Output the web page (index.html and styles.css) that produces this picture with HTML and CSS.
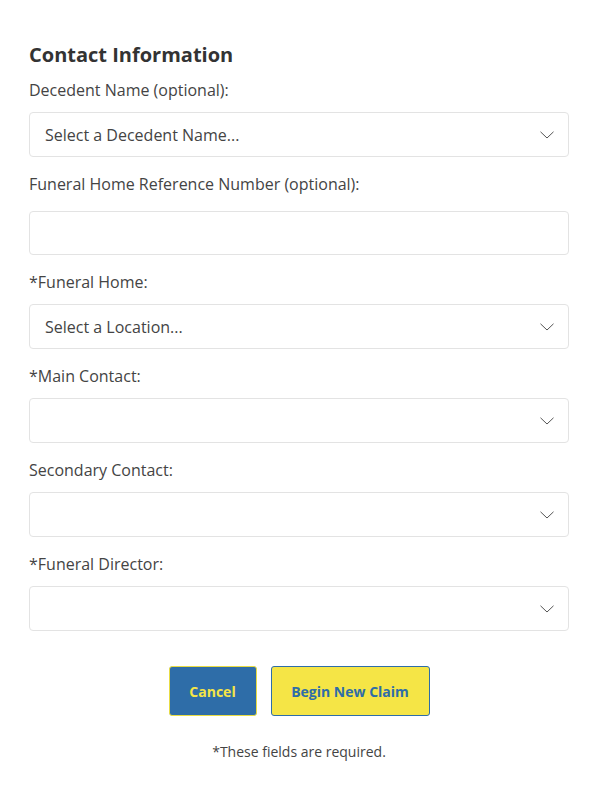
FILE: index.html
```html
<!DOCTYPE html>
<html lang="en">
<head>
<meta charset="utf-8">
<title>Contact Information</title>
<link rel="stylesheet" href="styles.css">
</head>
<body>
<main class="modal">
  <h2 class="title">Contact Information</h2>
  <form class="form">
    <div class="group">
      <label class="label">Decedent Name (optional):</label>
      <div class="field select"><span class="value">Select a Decedent Name...</span>
        <svg class="chev" width="14" height="8" viewBox="0 0 14 8"><path d="M0.5 0.8 L7 7 L13.5 0.8" fill="none" stroke="#555" stroke-width="1"/></svg></div>
    </div>
    <div class="group">
      <label class="label">Funeral Home Reference Number (optional):</label>
      <div class="field input"></div>
    </div>
    <div class="group">
      <label class="label">*Funeral Home:</label>
      <div class="field select"><span class="value">Select a Location...</span>
        <svg class="chev" width="14" height="8" viewBox="0 0 14 8"><path d="M0.5 0.8 L7 7 L13.5 0.8" fill="none" stroke="#555" stroke-width="1"/></svg></div>
    </div>
    <div class="group">
      <label class="label">*Main Contact:</label>
      <div class="field select"><span class="value"></span>
        <svg class="chev" width="14" height="8" viewBox="0 0 14 8"><path d="M0.5 0.8 L7 7 L13.5 0.8" fill="none" stroke="#555" stroke-width="1"/></svg></div>
    </div>
    <div class="group">
      <label class="label">Secondary Contact:</label>
      <div class="field select"><span class="value"></span>
        <svg class="chev" width="14" height="8" viewBox="0 0 14 8"><path d="M0.5 0.8 L7 7 L13.5 0.8" fill="none" stroke="#555" stroke-width="1"/></svg></div>
    </div>
    <div class="group">
      <label class="label">*Funeral Director:</label>
      <div class="field select"><span class="value"></span>
        <svg class="chev" width="14" height="8" viewBox="0 0 14 8"><path d="M0.5 0.8 L7 7 L13.5 0.8" fill="none" stroke="#555" stroke-width="1"/></svg></div>
    </div>
    <div class="actions">
      <button type="button" class="btn btn-cancel">Cancel</button>
      <button type="button" class="btn btn-begin">Begin New Claim</button>
    </div>
    <p class="note">*These fields are required.</p>
  </form>
</main>
</body>
</html>
```

FILE: styles.css
```css
html, body {
  margin: 0;
  padding: 0;
  background: #fff;
}
body {
  font-family: "Open Sans", "Noto Sans", sans-serif;
  color: #444;
}
.modal {
  padding: 41px 30px 0 29px;
}
.title {
  margin: 0 0 10px;
  font-size: 20px;
  line-height: 28px;
  font-weight: 700;
  color: #333;
}
.form {
  display: flex;
  flex-direction: column;
}
.group {
  display: flex;
  flex-direction: column;
  margin-bottom: 16px;
}
.label {
  font-size: 16px;
  line-height: 22px;
  color: #444;
  margin-bottom: 11px;
}
.group:nth-child(2) .label {
  margin-bottom: 16px;
}
.field {
  box-sizing: border-box;
  height: 45px;
  border: 1px solid #e3e3e3;
  border-radius: 4px;
  display: flex;
  align-items: center;
  justify-content: space-between;
  padding: 0 14px 0 15px;
  background: #fff;
}
.field.input {
  height: 44px;
}
.value {
  font-size: 16px;
  color: #444;
}
.chev {
  display: block;
}
.actions {
  display: flex;
  justify-content: center;
  gap: 14px;
  margin-top: 19px;
}
.btn {
  height: 50px;
  border-radius: 3px;
  font-family: "Open Sans", "Noto Sans", sans-serif;
  font-size: 14px;
  font-weight: 700;
  cursor: pointer;
}
.btn-cancel {
  width: 88px;
  background: #2e6da8;
  border: 1px solid #e8dc43;
  color: #f5e546;
}
.btn-begin {
  width: 159px;
  background: #f5e546;
  border: 1px solid #2e6da8;
  color: #2e6da8;
}
.note {
  text-align: center;
  margin: 26px 0 0;
  font-size: 14px;
  line-height: 20px;
  color: #444;
}
```
